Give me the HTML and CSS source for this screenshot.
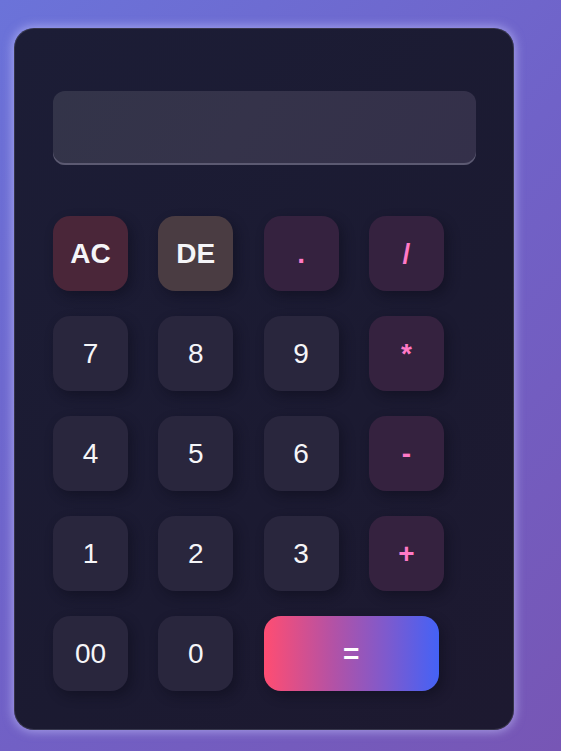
FILE: index.html
```html
<!DOCTYPE html>
<html>
<head>
<meta charset="utf-8">
<link rel="stylesheet" href="styles.css">
</head>
<body>
<div class="calc">
  <div class="display"></div>
  <div class="keys">
    <div class="key clear">AC</div>
    <div class="key del">DE</div>
    <div class="key op">.</div>
    <div class="key op">/</div>
    <div class="key">7</div>
    <div class="key">8</div>
    <div class="key">9</div>
    <div class="key op">*</div>
    <div class="key">4</div>
    <div class="key">5</div>
    <div class="key">6</div>
    <div class="key op">-</div>
    <div class="key">1</div>
    <div class="key">2</div>
    <div class="key">3</div>
    <div class="key op">+</div>
    <div class="key">00</div>
    <div class="key">0</div>
    <div class="key equal">=</div>
  </div>
</div>
</body>
</html>
```
FILE: styles.css
```css
html, body {
  margin: 0;
  padding: 0;
}
body {
  width: 561px;
  height: 751px;
  overflow: hidden;
  background: linear-gradient(135deg, #6b73d9 0%, #7062c8 50%, #7756b5 100%);
  font-family: "Liberation Sans", Arial, sans-serif;
  padding: 28px 0 0 14px;
  box-sizing: border-box;
}
.calc {
  width: 500px;
  height: 702px;
  box-sizing: border-box;
  padding: 62px 37px 39px 38px;
  border-radius: 20px;
  background: linear-gradient(135deg, #1c1d36 0%, #1b1a31 60%, #1d1930 100%);
  box-shadow: 0 0 10px 2px rgba(200, 200, 255, 0.55);
  border: 1px solid rgba(255, 255, 255, 0.12);
}
.display {
  height: 74px;
  border-radius: 12px;
  background: linear-gradient(120deg, #333449 0%, #35334a 45%, #34304a 100%);
  box-shadow: inset 0 -2px 0 #5c5a72;
  margin-bottom: 51px;
}
.keys {
  display: grid;
  grid-template-columns: repeat(4, 75px);
  column-gap: 30.3px;
  row-gap: 25px;
}
.key {
  width: 75px;
  height: 75px;
  border-radius: 17px;
  background: #29263d;
  color: #f5f5f8;
  font-size: 28px;
  display: flex;
  align-items: center;
  justify-content: center;
  box-shadow: 4px 5px 12px rgba(10, 10, 25, 0.45);
}
.op {
  background: #35223f;
  color: #ff79c6;
  font-weight: bold;
}
.clear {
  background: #4a2639;
  font-weight: bold;
}
.del {
  background: #4a3c42;
  font-weight: bold;
}
.equal {
  grid-column: span 2;
  width: 175px;
  background: linear-gradient(90deg, #ff4d72 0%, #b252a6 40%, #7e5acd 70%, #4462f6 100%);
  font-weight: bold;
  color: #ffffff;
}
```
